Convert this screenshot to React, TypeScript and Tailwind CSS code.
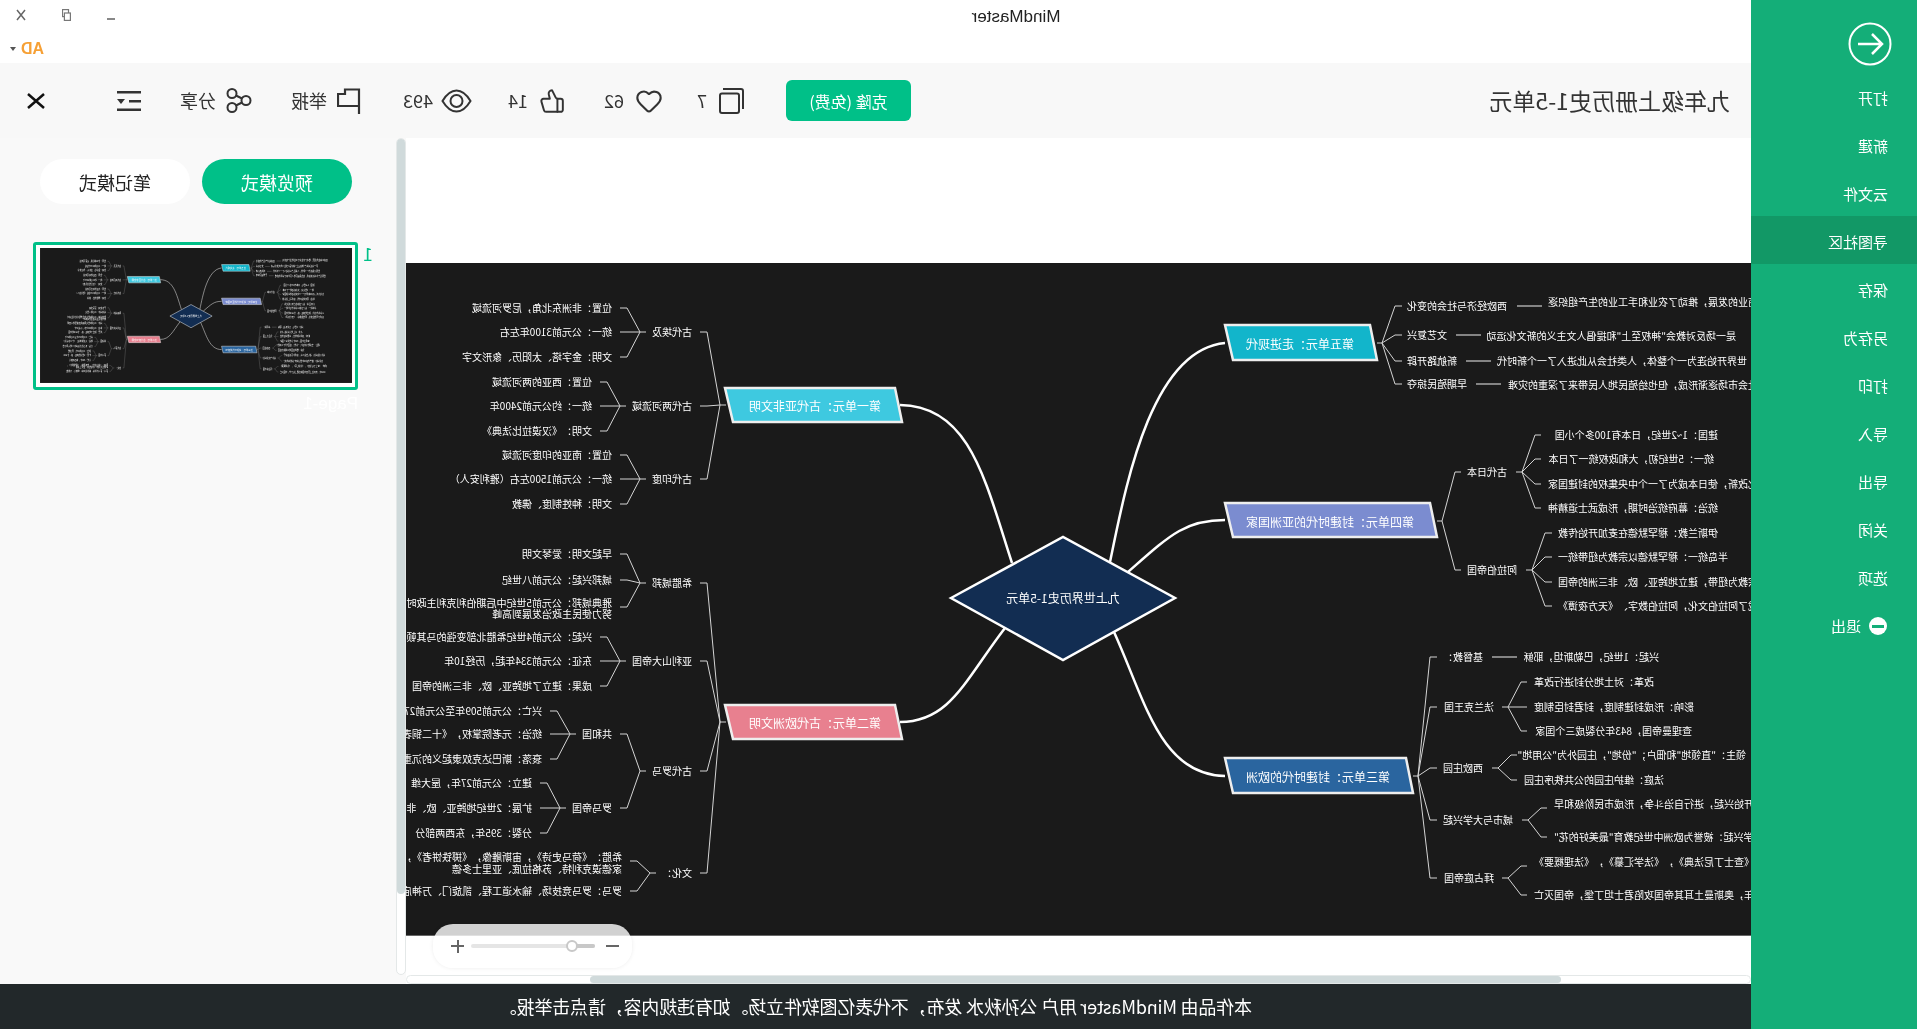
import { Heart, ThumbsUp } from 'lucide-react';

const cjk = 'font-["Noto_Sans_CJK_SC","Noto_Sans",sans-serif]';

type Label = { t: string; y: number; r?: number; l?: number };
type Bracket = [number, number, number, number, number, number[]];

// map coordinates are read off the picture: x grows the way the screen shows it
const brackets: Bracket[] = [
  [726, 405, 720, 700, 707, [332, 406, 479]],
  [646, 332, 640, 620, 627, [308, 332, 357]],
  [626, 406, 620, 600, 607, [382, 406, 431]],
  [646, 479, 640, 620, 627, [455, 479, 504]],
  [726, 722, 720, 700, 707, [583, 661, 771, 873]],
  [646, 583, 640, 620, 627, [554, 580, 607]],
  [626, 661, 620, 600, 607, [637, 661, 686]],
  [646, 771, 640, 620, 627, [734, 808]],
  [576, 734, 570, 550, 557, [711, 734, 759]],
  [566, 808, 560, 540, 547, [783, 808, 833]],
  [656, 873, 650, 630, 637, [861, 891]],
  [1377, 343, 1382, 1402, 1395, [306, 335, 361, 384]],
  [1437, 521, 1442, 1461, 1455, [472, 570]],
  [1516, 472, 1522, 1541, 1535, [435, 459, 484, 508]],
  [1526, 570, 1532, 1552, 1545, [533, 557, 582, 606]],
  [1413, 776, 1418, 1437, 1430, [657, 707, 768, 820, 878]],
  [1502, 707, 1508, 1527, 1521, [682, 707, 731]],
  [1492, 768, 1498, 1517, 1511, [755, 780]],
  [1522, 820, 1528, 1547, 1541, [808, 837]],
  [1502, 878, 1508, 1527, 1521, [866, 895]],
];

const rules: [number, number, number][] = [
  [1517, 1542, 306],
  [1456, 1481, 335],
  [1466, 1491, 361],
  [1476, 1501, 384],
  [1492, 1517, 657],
];

const curves = [
  'M1012 563C985 480 970 406 900 405',
  'M1005 628C965 680 950 722 900 722',
  'M1110 562C1125 490 1150 350 1225 343',
  'M1128 572C1170 535 1185 520 1225 520',
  'M1114 632C1145 700 1160 775 1225 776',
];

const units = [
  { x1: 725, x2: 902, y1: 388, y2: 422, fill: '#3ec9e0', t: '第一单元：古代亚非文明', c: 815, y: 406 },
  { x1: 725, x2: 902, y1: 705, y2: 739, fill: '#e8808f', t: '第二单元：古代欧洲文明', c: 815, y: 723 },
  { x1: 1225, x2: 1377, y1: 325, y2: 360, fill: '#12b5cb', t: '第五单元：走进现代', c: 1300, y: 344 },
  { x1: 1225, x2: 1437, y1: 503, y2: 537, fill: '#7b8cd0', t: '第四单元：封建时代的亚洲国家', c: 1330, y: 522 },
  { x1: 1225, x2: 1413, y1: 758, y2: 793, fill: '#2a659f', t: '第三单元：封建时代的欧洲', c: 1318, y: 777 },
];

const labels: Label[] = [
  { t: '古代埃及', r: 692, y: 332 },
  { t: '位置：非洲东北角，尼罗河流域', r: 612, y: 308 },
  { t: '统一：公元前3100年左右', r: 612, y: 332 },
  { t: '文明：金字塔、太阳历、象形文字', r: 612, y: 357 },
  { t: '古代两河流域', r: 692, y: 406 },
  { t: '位置：西亚的两河流域', r: 592, y: 382 },
  { t: '统一：约公元前2400年', r: 592, y: 406 },
  { t: '文明：《汉谟拉比法典》', r: 592, y: 431 },
  { t: '古代印度', r: 692, y: 479 },
  { t: '位置：南亚的印度河流域', r: 612, y: 455 },
  { t: '统一：公元前1500左右（雅利安人）', r: 612, y: 479 },
  { t: '文明：种姓制度、佛教', r: 612, y: 504 },
  { t: '希腊城邦', r: 692, y: 583 },
  { t: '早起文明：爱琴文明', r: 612, y: 554 },
  { t: '城邦兴起：公元前八世纪', r: 612, y: 580 },
  { t: '雅典城邦：公元前5世纪中后期伯利克利主政时', r: 612, y: 603 },
  { t: '努力使民主政治发展到高峰', r: 612, y: 614 },
  { t: '亚利山大帝国', r: 692, y: 661 },
  { t: '兴起：公元前4世纪希腊北部变强的马其顿', r: 592, y: 637 },
  { t: '东征：公元前334年起，历经10年', r: 592, y: 661 },
  { t: '成果：建立了地跨亚、欧、非三洲的帝国', r: 592, y: 686 },
  { t: '古代罗马', r: 692, y: 771 },
  { t: '共和国', r: 612, y: 734 },
  { t: '兴亡：公元前509年至公元前27年', r: 542, y: 711 },
  { t: '统治：元老院掌权，《十二铜表法》', r: 542, y: 734 },
  { t: '衰落：斯巴达克奴隶起义的沉重打击', r: 542, y: 759 },
  { t: '罗马帝国', r: 612, y: 808 },
  { t: '建立：公元前27年，屋大维', r: 532, y: 783 },
  { t: '扩展：2世纪地跨亚、欧、非三洲', r: 532, y: 808 },
  { t: '分裂：395年，东西两部分', r: 532, y: 833 },
  { t: '文化：', r: 692, y: 873 },
  { t: '希腊：《荷马史诗》，宙斯雕像，《掷铁饼者》，', r: 622, y: 857 },
  { t: '家德谟克利特、苏格拉底、亚里士多德', r: 622, y: 869 },
  { t: '罗马：罗马竞技场、输水道工程、凯旋门、万神庙', r: 622, y: 891 },
  { t: '西欧经济与社会的变化', r: 1507, y: 306 },
  { t: '西欧工商业的发展，推动了农业和手工业的生产组织逐', l: 1548, y: 302 },
  { t: '文艺复兴', r: 1447, y: 335 },
  { t: '是一场反对教会"神权至上"和提倡人文主义的新文化运动', r: 1736, y: 336 },
  { t: '新航路开辟', r: 1457, y: 361 },
  { t: '世界开始连为一个整体，人类社会从此进入了一个新时代', r: 1747, y: 361 },
  { t: '早期殖民掠夺', r: 1467, y: 384 },
  { t: '世界社会市场逐渐形成，但也给殖民地人民带来了深重的灾难', l: 1508, y: 385 },
  { t: '古代日本', r: 1507, y: 472 },
  { t: '建国：1~2世纪，日本有100多个小国', r: 1718, y: 435 },
  { t: '统一：5世纪初，大和政权统一了日本', r: 1714, y: 459 },
  { t: '大化改新，使日本成为了一个中央集权的封建国家', l: 1548, y: 484 },
  { t: '统治：幕府统治时期，形成武士道精神', r: 1718, y: 508 },
  { t: '阿拉伯帝国', r: 1517, y: 570 },
  { t: '伊斯兰教：穆罕默德在麦加开始传教', r: 1718, y: 533 },
  { t: '半岛统一：穆罕默德以宗教为纽带统一', r: 1728, y: 557 },
  { t: '以宗教为纽带，建立地跨亚、欧、非三洲的帝国', l: 1558, y: 582 },
  { t: '形成了阿拉伯文化，阿拉伯数字、《天方夜谭》', l: 1558, y: 606 },
  { t: '基督教：', r: 1483, y: 657 },
  { t: '兴起：1世纪，巴勒斯坦，耶稣', r: 1659, y: 657 },
  { t: '法兰克王国', r: 1494, y: 707 },
  { t: '改革：对土地分封进行改革', r: 1654, y: 682 },
  { t: '影响：形成封建制度，封君封臣制度', r: 1694, y: 707 },
  { t: '查理曼帝国，843年分裂成三个国家', r: 1692, y: 731 },
  { t: '西欧庄园', r: 1483, y: 768 },
  { t: '领主："直领地"和佃户；"份地"，庄园外为"公用地"', r: 1746, y: 755 },
  { t: '法庭：维护庄园的公共秩序庄园', r: 1664, y: 780 },
  { t: '城市与大学兴起', r: 1513, y: 820 },
  { t: '城市开始兴起，进行自治斗争，形成市民阶级和早', l: 1554, y: 804 },
  { t: '大学兴起：被誉为欧洲中世纪教育"最美好的花"', l: 1554, y: 837 },
  { t: '拜占庭帝国', r: 1494, y: 878 },
  { t: '成就：《查士丁尼法典》，《法学汇纂》，《法理概要》', l: 1534, y: 862 },
  { t: '1453年，奥斯曼土耳其帝国攻陷君士坦丁堡，帝国灭亡', l: 1534, y: 895 },
];

function MindMap() {
  return (
    <div className={`relative w-[1655px] h-[716px] bg-[#1a1a1a] ${cjk}`}>
      <svg width="1655" height="716" className="absolute left-0 top-0">
        <g transform="translate(1917 -237) scale(-1 1)" fill="none">
          {brackets.map(([from, py, joint, end, bend, ys], i) => (
            <path
              key={i}
              stroke="#d4d4d4"
              d={`M${from} ${py}L${joint} ${py}` + ys.map((y) => `M${joint} ${py}L${bend} ${y}L${end} ${y}`).join('')}
            />
          ))}
          {rules.map(([a, b, y], i) => (
            <path key={i} stroke="#a8a8a8" strokeWidth="1.5" d={`M${a} ${y}H${b}`} />
          ))}
          {curves.map((d, i) => (
            <path key={i} stroke="#ffffff" strokeWidth="2.5" d={d} />
          ))}
          {units.map((u, i) => (
            <polygon
              key={i}
              fill={u.fill}
              stroke="#eeeeee"
              strokeWidth="2.5"
              points={`${u.x1},${u.y1} ${u.x2 - 7},${u.y1} ${u.x2},${u.y2} ${u.x1 + 8},${u.y2}`}
            />
          ))}
          <polygon fill="#122d52" stroke="#ffffff" strokeWidth="2.5" points="951,598 1063,537 1175,598 1063,660" />
        </g>
      </svg>
      {units.map((u) => (
        <span
          key={u.t}
          className="absolute -translate-x-1/2 -translate-y-1/2 whitespace-nowrap text-[12px] leading-none text-white"
          style={{ left: 1917 - u.c, top: u.y - 237 }}
        >
          {u.t}
        </span>
      ))}
      <span
        className="absolute -translate-x-1/2 -translate-y-1/2 whitespace-nowrap text-[12px] leading-none text-white"
        style={{ left: 1917 - 1063, top: 598 - 237 }}
      >
        九上世界历史1-5单元
      </span>
      {labels.map((b) => (
        <span
          key={b.t}
          className="absolute -translate-y-1/2 whitespace-nowrap text-[10px] leading-none text-white"
          style={b.r !== undefined ? { left: 1917 - b.r, top: b.y - 237 } : { right: (b.l as number) - 262, top: b.y - 237 }}
        >
          {b.t}
        </span>
      ))}
    </div>
  );
}

const menu = ['打开', '新建', '云文件', '寻图社区', '保存', '另存为', '打印', '导入', '导出', '关闭', '选项'];

function Sidebar() {
  return (
    <aside className={`w-[166px] h-full shrink-0 bg-[#14ae78] text-white text-[15px] ${cjk}`}>
      <div className="h-[72px] pt-[22px] pl-[25px]">
        <svg width="44" height="44" viewBox="0 0 44 44" fill="none" stroke="#fff" strokeWidth="2">
          <circle cx="22" cy="22" r="20.5" />
          <path strokeWidth="2.5" d="M34 22H10M20 12 10 22l10 10" />
        </svg>
      </div>
      {menu.map((m) => (
        <div key={m} className={`h-12 flex items-center pl-[29px] pt-[4px] ${m === '寻图社区' ? 'bg-[#129866]' : ''}`}>
          {m}
        </div>
      ))}
      <div className="h-12 flex items-center gap-[8px] pl-[30px] pt-[4px]">
        <span className="w-[18px] h-[18px] rounded-full bg-white flex items-center justify-center">
          <span className="w-[12px] h-[3px] bg-[#14ae78]" />
        </span>
        退出
      </div>
    </aside>
  );
}

function Toolbar() {
  return (
    <div className={`h-[75px] shrink-0 bg-[#f8f8f8] flex items-center pl-[21px] text-[#333] text-[18px] ${cjk}`}>
      <div className="w-[819px] text-[23px] leading-none whitespace-nowrap">九年级上册历史1-5单元</div>
      <div className="w-[125px] h-[41px] rounded-[6px] bg-[#00c088] text-white text-[16px] flex items-center justify-center">克隆 (免费)</div>
      <div className="flex items-center gap-[12px] ml-[42px]">
        <svg width="25" height="26" viewBox="0 0 25 26" fill="none" stroke="#333" strokeWidth="2">
          <rect x="5" y="5.500" width="19" height="19.500" rx="2" />
          <path d="M1 21V3a2 2 0 0 1 2-2h18" />
        </svg>
        <span>7</span>
      </div>
      <div className="flex items-center gap-[11px] ml-[34px]">
        <Heart size={28} strokeWidth={1.8} />
        <span>62</span>
      </div>
      <div className="flex items-center gap-[11px] ml-[39px]">
        <ThumbsUp size={26} strokeWidth={1.8} />
        <span>14</span>
      </div>
      <div className="flex items-center gap-[8px] ml-[36px]">
        <svg width="31" height="24" viewBox="0 0 31 24" fill="none" stroke="#333" strokeWidth="2">
          <path d="M1.5 12C6 4.500 11 1.500 15.500 1.500S25 4.500 29.500 12C25 19.500 20 22.500 15.500 22.500S6 19.500 1.500 12Z" />
          <circle cx="15.500" cy="12" r="6" />
        </svg>
        <span>493</span>
      </div>
      <div className="flex items-center gap-[10px] ml-[42px]">
        <svg width="24" height="26" viewBox="0 0 24 26" fill="none" stroke="#333" strokeWidth="2.200">
          <path d="M2 26V1.500H16V6H23V18H2" />
        </svg>
        <span>举报</span>
      </div>
      <div className="flex items-center gap-[10px] ml-[39px]">
        <svg width="26" height="25" viewBox="0 0 26 25" fill="none" stroke="#333" strokeWidth="2">
          <circle cx="6" cy="12.500" r="4.500" />
          <circle cx="20" cy="5.500" r="4.500" />
          <circle cx="20" cy="19.500" r="4.500" />
          <path d="m10 10.500 6-3M10 14.500l6 3" />
        </svg>
        <span>分享</span>
      </div>
      <svg width="24" height="20" viewBox="0 0 24 20" className="ml-[39px]" fill="#333">
        <rect y="0" width="24" height="2.500" />
        <rect y="9" width="12" height="2.500" />
        <path d="M16 8h8l-4 5Z" />
        <rect y="17.500" width="24" height="2.500" />
      </svg>
      <svg width="18" height="16" viewBox="0 0 18 16" className="ml-[72px]" stroke="#111" strokeWidth="2.500" fill="none">
        <path d="m1 1 16 14M17 1 1 15" />
      </svg>
    </div>
  );
}

function ZoomPill() {
  return (
    <div className="absolute left-[1119px] top-[786px] w-[199px] h-[44px] rounded-[20px] bg-white/80 shadow-[0_0_4px_rgba(0,0,0,0.08)] flex items-center pl-[13px]">
      <span className="w-[13px] h-[2px] bg-[#666]" />
      <div className="relative ml-[11px] w-[124px] h-[4px] rounded-full bg-[#e5e5e5]">
        <div className="w-[23px] h-full rounded-full bg-[#c8c8c8]" />
        <span className="absolute left-[17px] -top-[4px] w-[12px] h-[12px] rounded-full bg-white border-2 border-[#c8c8c8]" />
      </div>
      <span className="relative ml-[7px] w-[13px] h-[13px]">
        <span className="absolute left-0 top-[5px] w-[13px] h-[2px] bg-[#666]" />
        <span className="absolute left-[5px] top-0 w-[2px] h-[13px] bg-[#666]" />
      </span>
    </div>
  );
}

function Canvas() {
  return (
    <div className="relative w-[1345px] shrink-0 bg-white flex flex-col">
      <div className="h-[125px] shrink-0" />
      <div className="h-[673px] shrink-0 overflow-hidden border-b border-[#666]">
        <div className="-ml-[166px] -mt-[26px]">
          <MindMap />
        </div>
      </div>
      <div className="h-[39px] shrink-0" />
      <div className="h-[9px] shrink-0 rounded-full border border-[#e4e8e8] bg-white">
        <div className="ml-[189px] w-[971px] h-full rounded-full bg-[#d0dadb]" />
      </div>
      <ZoomPill />
    </div>
  );
}

function Panel() {
  return (
    <div className={`flex-1 bg-[#f9f9f9] flex ${cjk}`}>
      <div className="w-[10px] h-[837px] shrink-0 rounded-full border border-[#e4e8e8] bg-white">
        <div className="h-[755px] rounded-full bg-[#d0dadb]" />
      </div>
      <div className="flex-1 pt-[21px]">
        <div className="flex gap-[12px] pl-[44px] text-[18px] leading-none">
          <div className="w-[150px] h-[45px] rounded-full bg-[#00c088] text-white flex items-center justify-center">预览模式</div>
          <div className="w-[150px] h-[45px] rounded-full bg-white text-[#222] flex items-center justify-center">笔记模式</div>
        </div>
        <div className="flex items-start mt-[38px] pl-[23px]">
          <span className="w-[15px] text-[#00c088] text-[18px] leading-none pt-[2px]">1</span>
          <div className="w-[325px]">
            <div className="h-[148px] rounded-[3px] border-[3px] border-[#00c088] bg-white p-[3px] pb-[4px]">
              <div className="w-[312px] h-[135px] overflow-hidden blur-[0.3px]">
                <div className="scale-[0.1885] origin-top-left">
                  <MindMap />
                </div>
              </div>
            </div>
            <div className="mt-[4px] text-white text-[17px] leading-[20px] font-['Liberation_Sans',sans-serif]">Page-1</div>
          </div>
        </div>
      </div>
    </div>
  );
}

export default function App() {
  return (
    <div className="w-screen h-screen overflow-hidden flex bg-white -scale-x-100 [text-spacing-trim:space-all]">
      <Sidebar />
      <div className="flex-1 flex flex-col min-w-0">
        <div className="relative h-[63px] shrink-0 bg-white text-[#222]">
          <div className="h-[34px] flex items-center justify-center pr-[281px] text-[17px] font-['Liberation_Sans',sans-serif]">MindMaster</div>
          <div className="absolute right-[16px] top-[9px] flex items-center gap-[36px]">
            <span className="w-[8px] h-[2px] bg-[#888] mt-[8px]" />
            <svg width="9" height="12" viewBox="0 0 9 12" fill="#fff" stroke="#777" strokeWidth="1.200">
              <rect x="2.500" y="0.600" width="6" height="7" />
              <rect x="0.600" y="4" width="6" height="7.400" />
            </svg>
            <svg width="10" height="12" viewBox="0 0 10 12" stroke="#666" strokeWidth="1.500">
              <path d="m1 1 8 10M9 1 1 11" />
            </svg>
          </div>
          <div className="absolute right-[10px] top-[41px] flex items-center gap-[5px] text-[#f6a035] text-[16px] font-bold leading-none font-['Liberation_Sans',sans-serif]">
            AD
            <span className="w-0 h-0 border-x-[3px] border-x-transparent border-t-[4px] border-t-[#555]" />
          </div>
        </div>
        <Toolbar />
        <div className="flex h-[846px] shrink-0">
          <Canvas />
          <Panel />
        </div>
        <div className={`flex-1 bg-[#22282a] text-white text-[18px] tracking-[-0.18px] flex items-center justify-center ${cjk}`}>
          本作品由 MindMaster 用户 公孙秋水 发布，不代表亿图软件立场。如有违规内容，请点击举报。
        </div>
      </div>
    </div>
  );
}
